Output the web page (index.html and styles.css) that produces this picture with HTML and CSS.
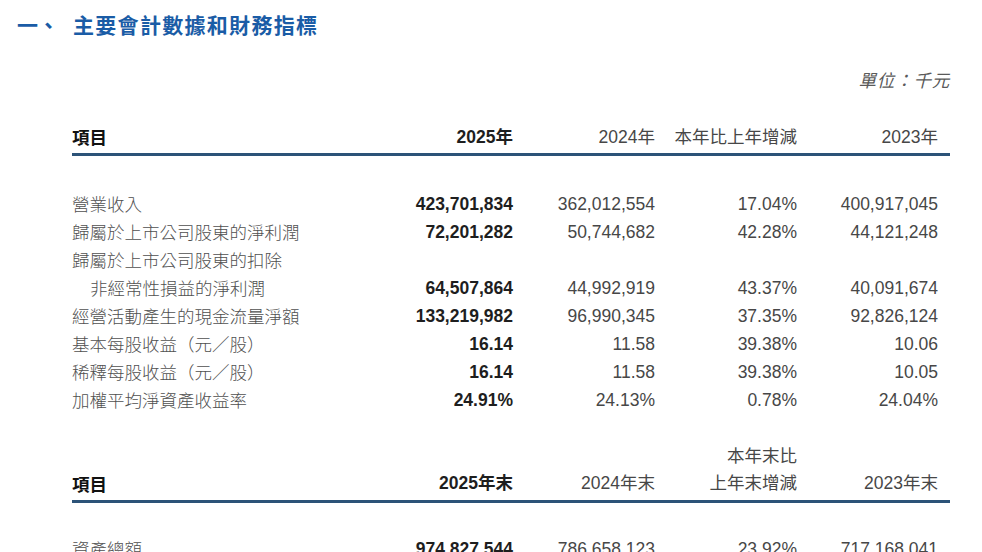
FILE: index.html
```html
<!DOCTYPE html>
<html lang="zh-Hant">
<head>
<meta charset="utf-8">
<title>主要會計數據和財務指標</title>
<link rel="stylesheet" href="styles.css">
</head>
<body>
<div class="page">
  <h2 class="title"><span class="num">一、</span><span class="text">主要會計數據和財務指標</span></h2>
  <div class="unit">單位：千元</div>

  <table class="fin">
    <colgroup>
      <col class="c-label"><col class="c-num"><col class="c-num"><col class="c-num"><col class="c-last">
    </colgroup>
    <thead>
      <tr>
        <th class="label strong">項目</th>
        <th class="strong">2025年</th>
        <th>2024年</th>
        <th>本年比上年增減</th>
        <th class="last">2023年</th>
      </tr>
    </thead>
    <tbody>
      <tr class="first">
        <td class="label">營業收入</td>
        <td class="strong">423,701,834</td>
        <td>362,012,554</td>
        <td>17.04%</td>
        <td class="last">400,917,045</td>
      </tr>
      <tr>
        <td class="label">歸屬於上市公司股東的淨利潤</td>
        <td class="strong">72,201,282</td>
        <td>50,744,682</td>
        <td>42.28%</td>
        <td class="last">44,121,248</td>
      </tr>
      <tr>
        <td class="label">歸屬於上市公司股東的扣除</td>
        <td></td><td></td><td></td><td class="last"></td>
      </tr>
      <tr>
        <td class="label indent">非經常性損益的淨利潤</td>
        <td class="strong">64,507,864</td>
        <td>44,992,919</td>
        <td>43.37%</td>
        <td class="last">40,091,674</td>
      </tr>
      <tr>
        <td class="label">經營活動產生的現金流量淨額</td>
        <td class="strong">133,219,982</td>
        <td>96,990,345</td>
        <td>37.35%</td>
        <td class="last">92,826,124</td>
      </tr>
      <tr>
        <td class="label">基本每股收益（元／股）</td>
        <td class="strong">16.14</td>
        <td>11.58</td>
        <td>39.38%</td>
        <td class="last">10.06</td>
      </tr>
      <tr>
        <td class="label">稀釋每股收益（元／股）</td>
        <td class="strong">16.14</td>
        <td>11.58</td>
        <td>39.38%</td>
        <td class="last">10.05</td>
      </tr>
      <tr>
        <td class="label">加權平均淨資產收益率</td>
        <td class="strong">24.91%</td>
        <td>24.13%</td>
        <td>0.78%</td>
        <td class="last">24.04%</td>
      </tr>
    </tbody>
  </table>

  <table class="fin second">
    <colgroup>
      <col class="c-label"><col class="c-num"><col class="c-num"><col class="c-num"><col class="c-last">
    </colgroup>
    <thead>
      <tr>
        <th class="label strong">項目</th>
        <th class="strong">2025年末</th>
        <th>2024年末</th>
        <th>本年末比<br>上年末增減</th>
        <th class="last">2023年末</th>
      </tr>
    </thead>
    <tbody>
      <tr class="first">
        <td class="label">資產總額</td>
        <td class="strong">974,827,544</td>
        <td>786,658,123</td>
        <td>23.92%</td>
        <td class="last">717,168,041</td>
      </tr>
    </tbody>
  </table>
</div>
</body>
</html>
```

FILE: styles.css
```css
html, body {
  margin: 0;
  padding: 0;
  background: #ffffff;
}
body {
  font-family: "Liberation Sans", "Noto Sans CJK TC", sans-serif;
  color: #333;
  overflow: hidden;
}
.page {
  width: 982px;
  height: 552px;
  overflow: hidden;
}
.title {
  margin: 0;
  height: 48px;
  line-height: 48px;
  padding-left: 17px;
  font-family: "Noto Sans CJK TC", sans-serif;
  font-weight: 700;
  font-size: 21px;
  color: #1a5ca6;
  display: flex;
}
.title .num {
  width: 56px;
}
.title .text {
  letter-spacing: 1.3px;
}
.unit {
  margin-top: 18px;
  height: 28px;
  line-height: 28px;
  width: 950px;
  text-align: right;
  font-family: "Noto Sans CJK TC", sans-serif;
  font-style: italic;
  font-size: 17.5px;
  color: #5a5a5a;
  letter-spacing: 0.8px;
}
.fin {
  margin-left: 72px;
  width: 878px;
  table-layout: fixed;
  border-collapse: collapse;
  border-spacing: 0;
}
.c-label { width: 299px; }
.c-num { width: 142px; }
.c-last { width: 153px; }
.fin th, .fin td {
  padding: 0;
  text-align: right;
  font-size: 17.5px;
  line-height: 28px;
  height: 28px;
  white-space: nowrap;
  color: #474747;
  font-weight: 400;
}
.fin th.last, .fin td.last {
  padding-right: 12px;
}
.fin .label {
  text-align: left;
  font-family: "Noto Sans CJK TC", sans-serif;
  color: #505050;
  font-weight: 300;
}
.fin .label.indent {
  padding-left: 18px;
}
.fin .strong {
  font-weight: 700;
  color: #1e1e1e;
}
.fin th.label.strong {
  font-weight: 700;
  color: #111;
}
.fin thead th {
  vertical-align: bottom;
  padding-top: 29px;
  padding-bottom: 2px;
  border-bottom: 3px solid #2c5378;
}
.fin tbody tr.first td {
  padding-top: 34px;
}
.second thead th {
  padding-top: 29px;
  line-height: 27px;
  padding-bottom: 3px;
}
.second tbody tr.first td {
  padding-top: 32px;
}
```
